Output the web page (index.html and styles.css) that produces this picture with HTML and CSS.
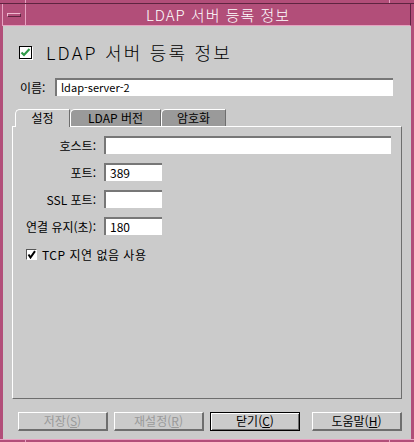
FILE: index.html
```html
<!DOCTYPE html>
<html lang="ko">
<head>
<meta charset="utf-8">
<link rel="stylesheet" href="styles.css">
</head>
<body>
<div class="window">
  <div class="frame-edge top"><span class="seg seg-l"></span><span class="seg seg-m"></span><span class="seg seg-r"></span></div>
  <div class="titlebar">
    <div class="menu-btn"><span class="menu-bar"></span></div>
    <div class="title">LDAP 서버 등록 정보</div>
  </div>
  <div class="content">
    <div class="header">
      <span class="big-check"><svg width="11" height="11" viewBox="0 0 11 11"><path d="M1.5 5.5 L4 8 L9.5 2" fill="none" stroke="#2f9a48" stroke-width="2.2"/></svg></span>
      <span class="header-text">LDAP 서버 등록 정보</span>
    </div>
    <div class="name-row">
      <span class="name-label">이름:</span>
      <div class="field grow latin">ldap-server-2</div>
    </div>
    <div class="tabs">
      <div class="tab active t1">설정</div>
      <div class="tab t2">LDAP 버전</div>
      <div class="tab t3">암호화</div>
    </div>
    <div class="panel">
      <div class="form-grid">
        <span class="lbl">호스트:</span><div class="field"></div>
        <span class="lbl">포트:</span><div class="field short">389</div>
        <span class="lbl">SSL 포트:</span><div class="field short"></div>
        <span class="lbl">연결 유지(초):</span><div class="field short">180</div>
      </div>
      <div class="check-row">
        <span class="small-check"><svg width="9" height="9" viewBox="0 0 9 9"><path d="M1.5 4.5 L3.5 7.5 L8 1.2" fill="none" stroke="#000" stroke-width="2"/></svg></span>
        <span class="check-text">TCP 지연 없음 사용</span>
      </div>
    </div>
    <div class="buttons">
      <div class="btn disabled">저장(<u>S</u>)</div>
      <div class="btn disabled">재설정(<u>R</u>)</div>
      <div class="btn default">닫기(<u>C</u>)</div>
      <div class="btn help">도움말(<u>H</u>)</div>
    </div>
  </div>
  <div class="frame-edge bottom"><span class="seg seg-l"></span><span class="seg seg-m"></span><span class="seg seg-r"></span></div>
</div>
</body>
</html>
```

FILE: styles.css
```css
* { box-sizing: border-box; margin: 0; padding: 0; }
body {
  margin: 0;
  width: 414px;
  height: 442px;
  overflow: hidden;
  font-family: "Noto Sans CJK KR", "Noto Sans", sans-serif;
  font-size: 12px;
  color: #000;
  background: #b24e79;
}
.window {
  width: 414px;
  height: 442px;
  background: #b24e79;
  display: flex;
  flex-direction: column;
}
.frame-edge { display: flex; }
.frame-edge.top { height: 4px; border-bottom: 1px solid #5e2440; }
.frame-edge.bottom { height: 3px; border-top: 1px solid #e6a2c1; }
.seg { display: block; height: 100%; }
.seg-l { width: 26px; border-right: 1px solid #e6a2c1; }
.seg-m { flex: 1; border-right: 1px solid #e6a2c1; }
.seg-r { width: 24px; }

.titlebar {
  height: 22px;
  margin: 0 3px 0 2px;
  display: flex;
  border-left: 1px solid #e6a2c1;
  border-right: 1px solid #5e2440;
  border-bottom: 1px solid #e6a2c1;
}
.menu-btn {
  width: 23px;
  border-right: 1px solid #e6a2c1;
  display: flex;
  align-items: center;
  justify-content: center;
}
.menu-bar {
  display: block;
  width: 14px;
  height: 4px;
  border-top: 1px solid #f0b8d0;
  border-left: 1px solid #f0b8d0;
  border-bottom: 1px solid #5e2440;
  border-right: 1px solid #5e2440;
}
.title {
  flex: 1;
  color: #fff;
  font-size: 15px;
  font-weight: 300;
  letter-spacing: 1px;
  text-align: center;
  line-height: 21px;
}

.content {
  flex: 1;
  margin: 0 3px;
  background: #cbcbcb;
  display: flex;
  flex-direction: column;
}
.header {
  margin-top: 16px;
  height: 20px;
  padding-left: 16px;
  display: flex;
  align-items: center;
}
.big-check {
  width: 13px;
  height: 13px;
  background: #fff;
  border: 1px solid #000;
  box-shadow: 1px 1px 0 #fff;
  display: flex;
  align-items: center;
  justify-content: center;
}
.header-text {
  margin-left: 14px;
  font-size: 18px;
  font-weight: 300;
  letter-spacing: 2.2px;
  line-height: 20px;
}
.name-row {
  margin-top: 16px;
  height: 18px;
  padding-left: 17px;
  padding-right: 18px;
  display: flex;
  align-items: center;
}
.name-label { width: 35px; }
.field {
  height: 18px;
  background: #fff;
  border-top: 2px solid #777;
  border-left: 2px solid #777;
  padding-left: 4px;
  line-height: 15px;
  font-size: 12px;
}
.field.latin { font-size: 11px; }
.grow { flex: 1; }
.short { width: 58px; }

.tabs {
  margin-top: 13px;
  margin-left: 12px;
  height: 17px;
  display: flex;
  align-items: flex-end;
}
.tab {
  height: 17px;
  background: #9a9a9a;
  border-top: 1px solid #fff;
  border-left: 1px solid #fff;
  border-right: 1px solid #6e6e6e;
  border-top-left-radius: 5px;
  text-align: center;
  line-height: 16px;
  font-size: 12px;
}
.tab.active {
  background: #cbcbcb;
  height: 18px;
  margin-bottom: -1px;
  position: relative;
  z-index: 1;
}
.t1 { width: 55px; }
.t2 { width: 91px; }
.t3 { width: 65px; }

.panel {
  height: 273px;
  margin: 0 9px;
  border-top: 1px solid #fff;
  border-left: 1px solid #fff;
  border-right: 1px solid #6e6e6e;
  border-bottom: 1px solid #6e6e6e;
  padding: 9px 10px 0 7px;
}
.form-grid {
  display: grid;
  grid-template-columns: 76px 1fr;
  column-gap: 8px;
  row-gap: 9px;
  align-items: center;
}
.lbl { text-align: right; }
.check-row {
  margin-top: 13px;
  padding-left: 6px;
  height: 12px;
  display: flex;
  align-items: center;
  gap: 5px;
  font-size: 12px;
}
.check-text { letter-spacing: 0.5px; }
.small-check {
  width: 11px;
  height: 11px;
  background: #fff;
  border-top: 1px solid #555;
  border-left: 1px solid #555;
  border-right: 1px solid #fff;
  border-bottom: 1px solid #fff;
  display: flex;
  align-items: center;
  justify-content: center;
}

.buttons {
  margin-top: 13px;
  padding-left: 15px;
  display: flex;
  gap: 6px;
}
.btn {
  width: 90px;
  height: 19px;
  border-top: 1px solid #fff;
  border-left: 1px solid #fff;
  border-right: 2px solid #6e6e6e;
  border-bottom: 2px solid #6e6e6e;
  text-align: center;
  line-height: 16px;
  font-size: 12px;
}
.btn.disabled { color: #9a9a9a; }
.btn.default {
  border: 1px solid #000;
  box-shadow: inset 1px 1px 0 #fff, inset -1px -1px 0 #6e6e6e;
}
.btn.help { margin-left: 6px; }
u { text-underline-offset: 1px; }
```
